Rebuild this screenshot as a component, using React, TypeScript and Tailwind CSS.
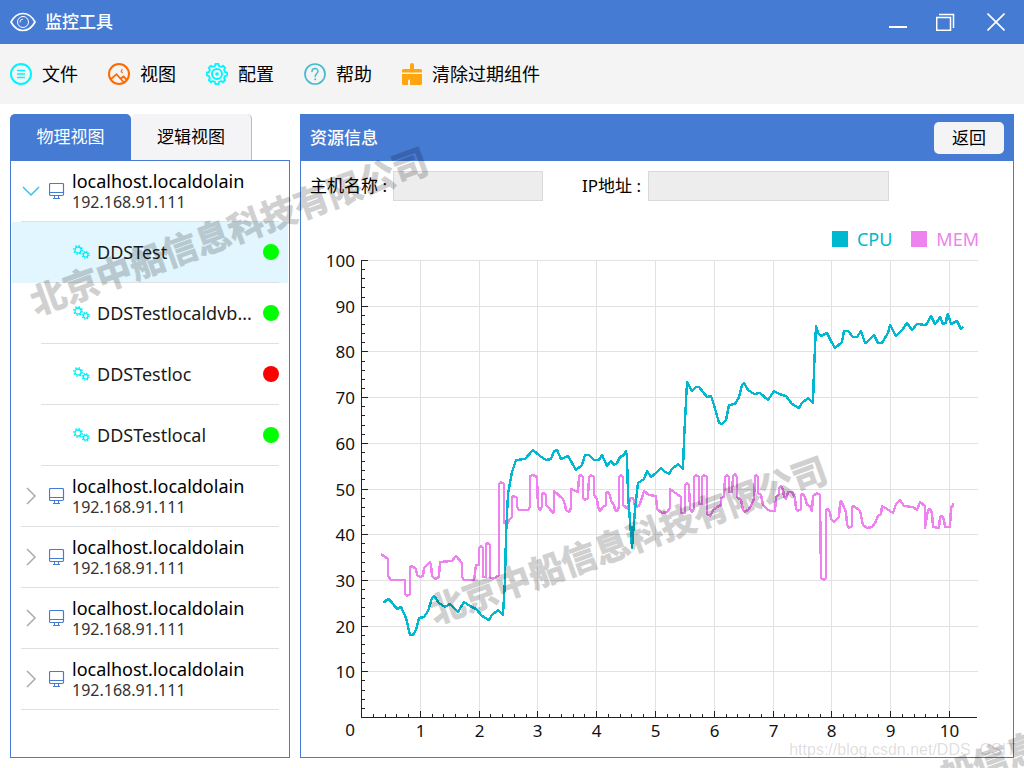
import React, { useState } from "react";

const CPU: number[] = [
  384, 603, 385, 601, 389, 599, 397, 609, 401, 607, 406, 618, 410, 635, 413, 635, 416, 630, 419, 618, 424, 617, 428, 611,
  432, 598, 434, 596, 439, 603, 445, 607, 450, 604, 458, 612, 464, 602, 470, 606, 476, 609, 482, 616, 489, 620, 492, 615,
  498, 610, 503, 615, 505, 580, 506, 535, 508, 494, 512, 472, 516, 460, 525, 459, 533, 450, 540, 456, 546, 460, 551, 459,
  554, 451, 557, 450, 561, 459, 568, 456, 576, 470, 582, 465, 585, 455, 589, 455, 594, 460, 599, 460, 602, 455, 607, 466,
  611, 461, 614, 465, 617, 463, 620, 457, 624, 455, 626, 451, 627, 457, 628, 495, 632, 548, 635, 510, 638, 483, 644, 479,
  647, 471, 651, 477, 656, 473, 661, 468, 664, 471, 669, 474, 672, 469, 678, 464, 683, 469, 684, 440, 687, 382, 692, 391,
  696, 387, 699, 387, 707, 397, 711, 396, 714, 405, 719, 423, 722, 424, 726, 420, 729, 405, 735, 404, 739, 397, 742, 385,
  744, 383, 748, 390, 754, 394, 760, 393, 768, 400, 774, 391, 779, 394, 786, 396, 792, 404, 799, 408, 802, 403, 808, 398,
  813, 403, 814, 370, 816, 326, 818, 333, 821, 336, 827, 333, 832, 343, 835, 348, 842, 342, 844, 331, 848, 331, 853, 337,
  857, 337, 861, 331, 865, 343, 867, 342, 874, 335, 878, 343, 882, 343, 888, 333, 890, 325, 896, 336, 902, 330, 907, 323,
  912, 330, 917, 324, 926, 325, 931, 316, 935, 324, 937, 322, 940, 317, 943, 324, 946, 323, 947, 315, 948, 314, 951, 324,
  957, 321, 961, 329, 963, 327,
];

const MEM: number[] = [
  381, 554, 388, 559, 388, 576, 391, 580, 405, 580, 405, 594, 407, 596, 410, 594, 410, 567, 412, 566, 416, 569, 417, 575,
  420, 577, 423, 576, 424, 568, 430, 562, 431, 565, 432, 576, 435, 579, 439, 577, 440, 562, 452, 561, 456, 556, 462, 563,
  462, 577, 464, 580, 474, 580, 476, 565, 479, 565, 479, 548, 481, 546, 483, 548, 483, 577, 486, 577, 486, 544, 488, 543,
  490, 545, 490, 577, 493, 579, 496, 577, 499, 575, 499, 484, 501, 482, 504, 484, 504, 523, 507, 524, 509, 520, 512, 517,
  512, 497, 514, 496, 517, 498, 517, 507, 519, 510, 528, 510, 530, 507, 530, 476, 533, 475, 537, 477, 538, 507, 540, 510,
  542, 507, 542, 494, 544, 493, 546, 495, 546, 505, 549, 508, 553, 513, 554, 511, 554, 491, 563, 499, 565, 505, 566, 510,
  569, 512, 571, 508, 571, 489, 578, 492, 579, 476, 581, 475, 583, 477, 583, 498, 585, 500, 588, 498, 589, 477, 591, 475,
  594, 477, 594, 495, 597, 499, 598, 507, 600, 511, 603, 507, 606, 505, 606, 493, 608, 492, 610, 495, 611, 501, 614, 505,
  615, 510, 617, 511, 619, 507, 619, 477, 621, 475, 623, 477, 623, 505, 628, 509, 630, 498, 633, 498, 634, 501, 635, 507,
  639, 506, 641, 501, 644, 491, 649, 495, 656, 496, 657, 509, 662, 513, 667, 512, 670, 508, 670, 489, 681, 497, 681, 513,
  685, 513, 685, 485, 687, 483, 689, 485, 690, 509, 692, 512, 694, 509, 694, 477, 696, 475, 699, 477, 699, 504, 702, 504,
  702, 477, 704, 475, 707, 477, 707, 514, 710, 516, 712, 513, 713, 510, 717, 507, 721, 505, 721, 498, 724, 497, 725, 477,
  727, 475, 729, 477, 729, 492, 732, 492, 733, 476, 735, 474, 737, 477, 737, 497, 741, 500, 743, 510, 745, 512, 749, 509,
  752, 504, 754, 499, 755, 477, 756, 475, 758, 477, 758, 493, 761, 495, 763, 505, 767, 509, 770, 511, 775, 511, 776, 497,
  779, 494, 779, 488, 781, 486, 783, 489, 784, 497, 786, 499, 788, 492, 792, 492, 795, 498, 796, 509, 798, 511, 801, 509,
  801, 495, 803, 494, 805, 497, 807, 505, 810, 506, 812, 511, 813, 496, 817, 493, 820, 495, 821, 578, 824, 580, 826, 578,
  826, 510, 828, 509, 830, 512, 831, 519, 834, 522, 839, 517, 840, 503, 841, 501, 843, 505, 846, 512, 847, 525, 849, 528,
  852, 526, 852, 507, 854, 506, 860, 511, 863, 525, 867, 528, 872, 527, 875, 523, 878, 516, 881, 514, 882, 506, 887, 509,
  893, 513, 896, 504, 900, 500, 904, 506, 913, 507, 917, 510, 920, 502, 925, 506, 925, 528, 928, 510, 930, 509, 932, 513,
  933, 527, 939, 528, 940, 517, 942, 516, 944, 520, 945, 527, 950, 527, 951, 507, 953, 506, 953, 503,
];

const X0 = 361;
const Y0 = 717;
const xAt = (v: number) => Math.round(X0 + v * 58.8) + 0.5;
const yAt = (v: number) => Math.round(Y0 - v * 4.57) + 0.5;
const range = (n: number) => Array.from({ length: n }, (_, i) => i + 1);

function EyeIcon() {
  return (
    <svg width="26" height="20" viewBox="0 0 26 20" fill="none" stroke="#fff" aria-hidden="true">
      <path d="M1 10C4 4.500 8 1.500 13 1.500S22 4.500 25 10C22 15.500 18 18.500 13 18.500S4 15.500 1 10Z" strokeWidth="1.700" />
      <circle cx="13" cy="10" r="5.500" strokeWidth="1" />
      <path d="M10 10.500A3.200 3.200 0 0 1 13 7" strokeWidth="0.900" />
    </svg>
  );
}

function FileIcon() {
  return (
    <svg width="22" height="22" viewBox="0 0 22 22" fill="none" stroke="#00f6ff" aria-hidden="true">
      <circle cx="11" cy="11" r="10" strokeWidth="2" />
      <path d="M7 7.500h8M7 11h8M7 14.500h8" strokeWidth="1.400" />
    </svg>
  );
}

function ViewIcon() {
  return (
    <svg width="22" height="22" viewBox="0 0 22 22" fill="none" stroke="#ff6a00" aria-hidden="true">
      <circle cx="11" cy="11" r="10" strokeWidth="2" />
      <path d="M2.500 16.500L8.500 11.200L15.500 19M12.500 15.800L15.500 13.500L19 17" strokeWidth="1.800" />
      <path d="M14.300 6.300A2 2 0 0 0 14.500 10A2.600 2.600 0 0 1 14.300 6.300Z" strokeWidth="0.900" fill="#ff6a00" />
    </svg>
  );
}

function gearPath(cx: number, cy: number, teeth: number, outer: number, inner: number) {
  const step = (Math.PI * 2) / teeth;
  let d = "";
  for (let i = 0; i < teeth; i++) {
    const a = i * step - Math.PI / 2;
    const corners = [
      [inner, a - step * 0.29],
      [outer, a - step * 0.2],
      [outer, a + step * 0.2],
      [inner, a + step * 0.29],
    ];
    corners.forEach(([r, t], k) => {
      const cmd = i === 0 && k === 0 ? "M" : "L";
      d += `${cmd}${(cx + r * Math.cos(t)).toFixed(2)} ${(cy + r * Math.sin(t)).toFixed(2)}`;
    });
  }
  return d + "Z";
}

function ConfigIcon() {
  return (
    <svg width="22" height="22" viewBox="0 0 22 22" fill="none" stroke="#00f6ff" strokeLinejoin="round" aria-hidden="true">
      <path d={gearPath(11, 11, 8, 10.2, 8.3)} strokeWidth="1.800" />
      <circle cx="11" cy="11" r="5" strokeWidth="2" />
      <circle cx="11" cy="11" r="1.800" fill="#00f6ff" stroke="none" />
    </svg>
  );
}

function HelpIcon() {
  return (
    <svg width="22" height="22" viewBox="0 0 22 22" fill="none" stroke="#44bccf" aria-hidden="true">
      <circle cx="11" cy="11" r="10" strokeWidth="1.700" />
      <path d="M8 8.400C8 4.700 14 4.700 14 8.300C14 10.400 11.200 10.600 11.200 13.400" strokeWidth="1.500" strokeLinecap="round" />
      <circle cx="11.200" cy="16.200" r="1" fill="#44bccf" stroke="none" />
    </svg>
  );
}

function BroomIcon() {
  return (
    <svg width="20" height="22" viewBox="0 0 20 22" fill="#ffa50f" aria-hidden="true">
      <path d="M8 6V2A2 2 0 0 1 12 2V6H18.500A1.500 1.500 0 0 1 20 7.500V9.500H0V7.500A1.500 1.500 0 0 1 1.500 6Z" />
      <path d="M0 11H20V20.500A1.500 1.500 0 0 1 18.500 22H8V16L6 17.500V22H1.500A1.500 1.500 0 0 1 0 20.500Z" />
    </svg>
  );
}

function MonitorIcon() {
  return (
    <svg width="16" height="17" viewBox="0 0 16 17" fill="none" stroke="#467bd4" aria-hidden="true">
      <rect x="0.500" y="0.500" width="14" height="12" rx="1.200" strokeWidth="1.200" />
      <path d="M0.500 9.500H14.500M5.500 12.500V15.500M9.500 12.500V15.500M4 15.500H11" strokeWidth="1" />
    </svg>
  );
}

function GearsIcon() {
  return (
    <svg width="17" height="14" viewBox="0 0 17 14" fill="none" stroke="#00eefa" aria-hidden="true">
      <circle cx="5" cy="5" r="3" strokeWidth="1.300" />
      <circle cx="5" cy="5" r="4.200" strokeWidth="1.600" strokeDasharray="1.500 1.800" />
      <circle cx="12.700" cy="9.700" r="2.300" strokeWidth="1.200" />
      <circle cx="12.700" cy="9.700" r="3.400" strokeWidth="1.400" strokeDasharray="1.300 1.370" />
    </svg>
  );
}

function Chevron({ open }: { open: boolean }) {
  return open ? (
    <svg width="18" height="18" viewBox="0 0 18 18" fill="none" stroke="#35c3ee" strokeWidth="1.500" aria-hidden="true">
      <path d="M1 5L9 13L17 5" />
    </svg>
  ) : (
    <svg width="18" height="18" viewBox="0 0 18 18" fill="none" stroke="#aaa" strokeWidth="1.500" aria-hidden="true">
      <path d="M5 1L13 9L5 17" />
    </svg>
  );
}

const MENU = [
  { label: "文件", icon: <FileIcon /> },
  { label: "视图", icon: <ViewIcon /> },
  { label: "配置", icon: <ConfigIcon /> },
  { label: "帮助", icon: <HelpIcon /> },
  { label: "清除过期组件", icon: <BroomIcon /> },
];

const PROCESSES = [
  { name: "DDSTest", ok: true },
  { name: "DDSTestlocaldvb...", ok: true },
  { name: "DDSTestloc", ok: false },
  { name: "DDSTestlocal", ok: true },
];

const HOSTS = [0, 1, 2, 3, 4];

function HostRow({ open, onToggle }: { open: boolean; onToggle: () => void }) {
  return (
    <button
      type="button"
      aria-expanded={open}
      onClick={onToggle}
      className="mx-[10px] flex h-[61px] items-center border-b border-[#e0e0e0] text-left"
    >
      <span className="w-7 shrink-0 pl-[1px]">
        <Chevron open={open} />
      </span>
      <span className="w-[23px] shrink-0">
        <MonitorIcon />
      </span>
      <span className="flex flex-col">
        <span className="text-[18px] leading-[22px] text-black">localhost.localdolain</span>
        <span className="text-[16px] leading-5 text-[#333]">192.168.91.111</span>
      </span>
    </button>
  );
}

function ProcessRow({ name, ok, selected, onSelect }: { name: string; ok: boolean; selected: boolean; onSelect: () => void }) {
  return (
    <button
      type="button"
      aria-pressed={selected}
      onClick={onSelect}
      className={selected ? "mx-[1px] flex bg-[#e1f6fe] pr-[9px] pl-[29px]" : "mx-[1px] flex pr-[9px] pl-[29px]"}
    >
      <span className="flex h-[61px] flex-1 items-center border-b border-[#e0e0e0] pl-8">
        <GearsIcon />
        <span className="flex-1 pl-[7px] text-left text-[18px] leading-6 whitespace-nowrap text-[#1a1a1a]">{name}</span>
        <span className={ok ? "size-4 rounded-full bg-[#00ff00]" : "size-4 rounded-full bg-[#ff0000]"} />
      </span>
    </button>
  );
}

function Chart() {
  return (
    <svg viewBox="301 249 712 500" className="block w-full" role="img" aria-label="CPU / MEM">
      <g stroke="#e2e2e2" shapeRendering="crispEdges">
        {range(10).map((v) => (
          <path key={v} d={`M${xAt(v)} 260V${Y0}M${X0} ${yAt(v * 10)}H978`} />
        ))}
      </g>
      <g stroke="#222" shapeRendering="crispEdges">
        <path d={`M${X0 + 0.5} 260V${Y0 + 0.5}H977`} fill="none" />
        {range(50).map((i) => (
          <path key={i} d={`M${X0} ${yAt(i * 2)}h${i % 5 === 0 ? 7 : 4}M${xAt(i / 5)} ${Y0}v${i % 5 === 0 ? -6 : -3}`} />
        ))}
      </g>
      <g fill="#111" fontSize="17">
        {range(10).map((v) => (
          <text key={v} x="355" y={yAt(v * 10) + 6} textAnchor="end">
            {v * 10}
          </text>
        ))}
        {range(10).map((v) => (
          <text key={v} x={xAt(v)} y="737" textAnchor="middle">
            {v}
          </text>
        ))}
        <text x="350" y="736" textAnchor="middle">
          0
        </text>
      </g>
      <g fill="none" strokeWidth="2.400" strokeLinejoin="round" shapeRendering="crispEdges">
        <polyline points={MEM.join(" ")} stroke="#ee82ee" />
        <polyline points={CPU.join(" ")} stroke="#00b8d0" />
      </g>
    </svg>
  );
}

function Watermark({ place }: { place: string }) {
  return (
    <span
      className={
        "absolute -translate-x-1/2 -translate-y-1/2 -rotate-[20deg] text-[35px] leading-none font-bold whitespace-nowrap text-black opacity-18 [-webkit-text-stroke:1px_black] " +
        place
      }
    >
      北京中船信息科技有限公司
    </span>
  );
}

export default function App() {
  const [open, setOpen] = useState(0);
  const [selected, setSelected] = useState("DDSTest");
  const [tab, setTab] = useState(0);

  return (
    <div className="relative flex min-h-screen flex-col overflow-hidden bg-white font-['Noto_Sans','Noto_Sans_CJK_SC',sans-serif] text-[17px] text-black">
      <header className="flex h-11 items-center bg-[#467bd4] pr-[19px] pl-[10px] text-white">
        <EyeIcon />
        <h1 className="flex-1 pl-[9px] text-[17px] leading-6 font-medium">监控工具</h1>
        <div className="flex items-center gap-[29px]">
          <button type="button" aria-label="最小化">
            <svg width="18" height="18" viewBox="0 0 18 18" className="block" fill="none" stroke="#fff">
              <path d="M0 14H18" strokeWidth="2" />
            </svg>
          </button>
          <button type="button" aria-label="还原">
            <svg width="22" height="18" viewBox="0 0 22 18" className="block" fill="none" stroke="#fff">
              <path d="M3 1.500H17.500V15" strokeWidth="1.500" />
              <rect x="0.700" y="4.500" width="13.800" height="12.800" strokeWidth="1.500" />
            </svg>
          </button>
          <button type="button" aria-label="关闭">
            <svg width="18" height="18" viewBox="0 0 18 18" className="block" fill="none" stroke="#fff">
              <path d="M0.500 0.500L17.500 17.500M17.500 0.500L0.500 17.500" strokeWidth="1.600" />
            </svg>
          </button>
        </div>
      </header>

      <nav className="flex h-[60px] items-center gap-[30px] bg-[#f4f4f4] px-[10px]">
        {MENU.map((m) => (
          <button key={m.label} type="button" className="flex items-center gap-[9px] text-[18px] leading-6 whitespace-nowrap">
            {m.icon}
            <span className="pl-[1px]">{m.label}</span>
          </button>
        ))}
      </nav>

      <main className="grid flex-1 grid-cols-[280px_minmax(0,1fr)] gap-[10px] p-[10px]">
        <section className="flex flex-col">
          <div role="tablist" className="flex h-[46px]">
            {["物理视图", "逻辑视图"].map((label, i) => (
              <button
                key={label}
                type="button"
                role="tab"
                aria-selected={tab === i}
                onClick={() => setTab(i)}
                className={
                  tab === i
                    ? "w-[121px] rounded-t-[5px] bg-[#467bd4] text-white"
                    : "w-[121px] rounded-t-[5px] border-r border-[#bbb] bg-[#f4f4f6]"
                }
              >
                {label}
              </button>
            ))}
          </div>
          <div className="flex flex-1 flex-col border border-[#467bd4]">
            {HOSTS.map((h) => (
              <React.Fragment key={h}>
                <HostRow open={open === h} onToggle={() => setOpen(open === h ? -1 : h)} />
                {open === h &&
                  PROCESSES.map((p) => (
                    <ProcessRow key={p.name} {...p} selected={selected === p.name} onSelect={() => setSelected(p.name)} />
                  ))}
              </React.Fragment>
            ))}
          </div>
        </section>

        <section className="flex flex-col border border-t-0 border-[#467bd4]">
          <div className="flex h-[47px] items-center justify-between bg-[#467bd4] px-[9px]">
            <h2 className="leading-6 font-medium text-white">资源信息</h2>
            <button type="button" className="h-8 w-[70px] rounded-[5px] bg-[#f4f4f7]">
              返回
            </button>
          </div>
          <div className="flex items-center px-[9px] pt-[10px]">
            <label htmlFor="host" className="w-[83px] whitespace-nowrap">
              主机名称 :
            </label>
            <input id="host" type="text" className="mr-[39px] h-[30px] w-[150px] border border-[#d9d9d9] bg-[#ededed] px-2" />
            <label htmlFor="ip" className="w-[66px] whitespace-nowrap">
              IP地址 :
            </label>
            <input id="ip" type="text" className="h-[30px] w-[241px] border border-[#d9d9d9] bg-[#ededed] px-2" />
          </div>
          <div className="mt-7 flex h-5 items-center justify-end gap-[19px] pr-[34px] text-[18px]">
            <span className="flex items-center gap-[9px] text-[#00b8d0]">
              <span className="size-4 bg-[#00b8d0]" />
              CPU
            </span>
            <span className="flex items-center gap-[9px] text-[#ee82ee]">
              <span className="size-4 bg-[#ee82ee]" />
              MEM
            </span>
          </div>
          <Chart />
        </section>
      </main>

      <div aria-hidden="true" className="pointer-events-none absolute inset-0 overflow-hidden">
        <Watermark place="top-[231px] left-[229px]" />
        <Watermark place="top-[540px] left-[628px]" />
        <Watermark place="top-[743px] left-[1040px]" />
        <span className="absolute right-[8px] bottom-[8px] font-['Liberation_Sans',sans-serif] text-[16px] leading-5 text-black/15">
          https://blog.csdn.net/DDS_CSIT
        </span>
      </div>
    </div>
  );
}
